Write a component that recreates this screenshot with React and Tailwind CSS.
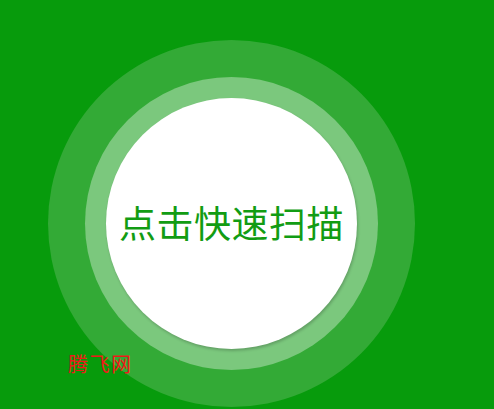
export default function App() {
    return (
        <div className="relative w-[494px] h-[409px] overflow-hidden bg-[#079b0c] pl-[48px] pt-[40px]" style={{ fontFamily: '"Noto Sans CJK SC", "Noto Sans", sans-serif' }}>
            {/* outer ring */}
            <div className="w-[367px] h-[367px] rounded-full bg-[#33aa36] flex items-center justify-center">
                {/* middle ring */}
                <div className="w-[293px] h-[293px] rounded-full bg-[#7bc87d] flex items-center justify-center">
                    {/* scan button */}
                    <div className="w-[251px] h-[251px] rounded-full bg-white shadow-[1px_2px_3px_rgba(0,0,0,0.2)] flex items-center justify-center">
                        <span className="text-[37px] leading-none text-[#129c13] tracking-[0.5px] pb-[2px]">点击快速扫描</span>
                    </div>
                </div>
            </div>

            {/* watermark */}
            <span className="absolute left-[68px] top-[354px] text-[20px] leading-none text-[#f01818] tracking-[1.5px]" style={{ fontFamily: '"Noto Sans CJK SC", serif' }}>
                腾飞网
            </span>
        </div>
    );
}
